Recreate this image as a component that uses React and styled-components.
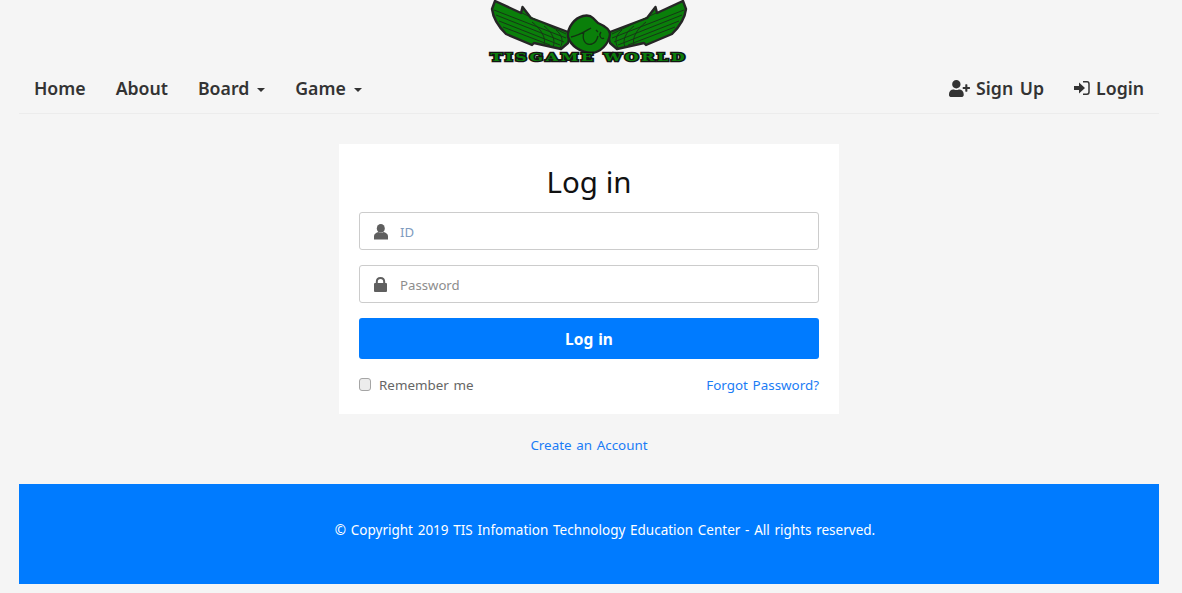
import React from "react";
import styled, { createGlobalStyle } from "styled-components";
import { FaUserPlus } from "react-icons/fa";

const Global = createGlobalStyle`
  html, body { margin: 0; padding: 0; background: #f5f5f5; }
  body { font-family: "Noto Sans", "Open Sans", "Liberation Sans", sans-serif; color: #333; overflow: hidden; }
  * { box-sizing: border-box; }
`;
const Page = styled.div`
  width: 1182px; height: 593px; padding: 0 23px 0 19px; display: flex; flex-direction: column;
`;
const LogoRow = styled.div`
  height: 65px; display: flex; justify-content: center;
`;
const Nav = styled.nav`
  height: 49px; border-bottom: 1px solid #ececec; display: flex; justify-content: space-between; align-items: center;
  padding: 0 15px 2px 15px;
`;
const NavGroup = styled.div`display: flex; align-items: center; gap: 30px;`;
const NavLink = styled.a`
  font-size: 17.7px; font-weight: 600; color: #333; line-height: 24px; display: flex; align-items: center; white-space: nowrap;
  word-spacing: 2px;
`;
const Caret = styled.span`
  width: 0; height: 0; margin-left: 8px; margin-top: 3px;
  border-left: 4px solid transparent; border-right: 4px solid transparent; border-top: 4px solid #333;
`;
const NavIcon = styled.span`display: inline-flex; margin-right: 6px; color: #333;`;
const Main = styled.main`
  flex: none; display: flex; flex-direction: column; align-items: center; padding-top: 30px;
`;
const Card = styled.form`
  width: 500px; height: 270px; background: #fff; padding: 20px; display: flex; flex-direction: column;
`;
const Title = styled.h2`
  flex: none; margin: -2px 0 11px; font-size: 29.5px; font-weight: 400; line-height: 39px; text-align: center; color: #111; height: 39px;
`;
const Field = styled.div`
  flex: none; height: 38px; border: 1px solid #ccc; border-radius: 3px; display: flex; align-items: center; margin-bottom: 15px;
  padding-left: 14px; background: #fff;
`;
const FieldIcon = styled.span`
  width: 26px; display: flex; color: #5f5f5f; padding-top: 1px;
`;
const Input = styled.input`
  flex: 1; border: 0; outline: 0; font: 400 13.2px "Noto Sans", sans-serif; color: #555; background: transparent; padding: 1px 0 0;
  &::placeholder { color: #8d8d8d; opacity: 1; }
`;
const IdInput = styled(Input)`&::placeholder { color: #7f9cc0; }`;
const Submit = styled.button`
  flex: none; height: 41px; border: 0; border-radius: 3px; background: #007bff; color: #fff; font: 700 15.5px "Noto Sans", sans-serif; width: 100%;
  word-spacing: 1px;
`;
const Options = styled.div`
  flex: none; display: flex; justify-content: space-between; align-items: center; margin-top: 16px; height: 20px; font-size: 13.4px;
  word-spacing: 1.2px;
`;
const Remember = styled.label`display: flex; align-items: center; color: #666; gap: 8px;`;
const Check = styled.span`
  width: 12px; height: 13px; border: 1px solid #a5a5a5; border-radius: 3px; background: #ececec; display: block; margin-top: -2px;
`;
const BlueLink = styled.a`color: #1a7cf5; font-size: 13.4px; white-space: nowrap; word-spacing: 1.2px;`;
const CreateRow = styled.div`margin-top: 21px; height: 20px; line-height: 18px; text-align: center;`;
const Footer = styled.footer`
  flex: none; height: 100px; margin-top: 29px; background: #007bff; color: #fff; display: flex; align-items: center; justify-content: center;
  font-size: 13.5px; word-spacing: 1.2px; padding: 0 0 9px 32px;
`;

const WING = "M7 1 L33 13 L34.5 7 L43 18 L80 32 L81.5 37 L80 43 L73 49 L46 43 L44 45 L18 34 C11 27 5 18 4 9 Z";
const Wing = ({ flip }) => (
  <g transform={flip ? "translate(202 0) scale(-1 1)" : undefined}>
    <path d={WING} fill="#0a7f0a" stroke="#262626" strokeWidth="2.4" strokeLinejoin="round" />
    <g fill="none" stroke="#173617" strokeWidth="1">
      <path d="M6 10 L78 38" />
      <path d="M8 15 L76 42" />
      <path d="M11 21 L72 45" />
      <path d="M15 27 L62 45" />
      <path d="M34 13 L78 34" />
      <path d="M44 22 C54 30 58 38 56 45" />
      <path d="M56 26 C64 32 68 40 65 47" />
      <path d="M68 30 C74 35 76 41 72 48" />
    </g>
  </g>
);
const Logo = () => (
  <svg width="202" height="65" viewBox="0 0 202 65">
    <Wing />
    <Wing flip />
    <path d="M95 16 C99 15 103 16 105 18 L110 23 C117 26 122 30 122 34 C121 44 112 53 103 53 C92 52 83 46 80 37 C79 27 87 18 95 16 Z" fill="#0a7f0a" stroke="#222" strokeWidth="2.4" />
    <path d="M83 37 C90 36 96 32 103 28 M96 32 C94 38 96 46 104 44 C107 43 109 40 110 36 M113 32 C110 36 114 40 116 38 M108 30 L110 32" fill="none" stroke="#123212" strokeWidth="1.3" />
    <text x="101" y="61" textAnchor="middle" fontFamily="'DejaVu Serif', serif" fontWeight="700" fontSize="11.5" letterSpacing="2"
      textLength="197" lengthAdjust="spacingAndGlyphs" fill="#0a7f0a" stroke="#141414" strokeWidth="2.6" paintOrder="stroke">TISGAME WORLD</text>
  </svg>
);
const LoginIcon = () => (
  <svg width="16" height="14" viewBox="0 0 16 14">
    <path d="M0 5 H5 V1.5 L11 7 L5 12.5 V9 H0 Z" fill="#333" />
    <path d="M9 .8 H13 Q15 .8 15 3 V11 Q15 13.2 13 13.2 H9" fill="none" stroke="#333" strokeWidth="1.5" />
  </svg>
);
const UserIcon = () => (
  <svg width="14" height="16" viewBox="0 0 14 16" fill="currentColor">
    <ellipse cx="6.8" cy="4.4" rx="4" ry="4.4" />
    <path d="M0 15.6 V12 C0 9.6 2.4 8.8 4.4 8 C6 9.4 8 9.4 9.6 8 C11.6 8.8 14 9.6 14 12 V15.6 Z" />
  </svg>
);
const LockIcon = () => (
  <svg width="13" height="15" viewBox="0 0 13 15">
    <path d="M2.8 7 V4.8 C2.8 2.6 4.3 1 6.5 1 C8.7 1 10.2 2.6 10.2 4.8 V7" fill="none" stroke="currentColor" strokeWidth="2" />
    <rect x="0" y="6" width="13" height="9" rx="1" fill="currentColor" />
  </svg>
);

export default function App() {
  return (
    <Page>
      <Global />
      <LogoRow><Logo /></LogoRow>
      <Nav>
        <NavGroup>
          <NavLink>Home</NavLink>
          <NavLink>About</NavLink>
          <NavLink>Board<Caret /></NavLink>
          <NavLink>Game<Caret /></NavLink>
        </NavGroup>
        <NavGroup>
          <NavLink><NavIcon><FaUserPlus size={21} /></NavIcon>Sign Up</NavLink>
          <NavLink><NavIcon><LoginIcon /></NavIcon>Login</NavLink>
        </NavGroup>
      </Nav>
      <Main>
        <Card>
          <Title>Log in</Title>
          <Field>
            <FieldIcon><UserIcon /></FieldIcon>
            <IdInput placeholder="ID" />
          </Field>
          <Field>
            <FieldIcon><LockIcon /></FieldIcon>
            <Input placeholder="Password" />
          </Field>
          <Submit type="button">Log in</Submit>
          <Options>
            <Remember><Check />Remember me</Remember>
            <BlueLink>Forgot Password?</BlueLink>
          </Options>
        </Card>
        <CreateRow><BlueLink>Create an Account</BlueLink></CreateRow>
      </Main>
      <Footer>© Copyright 2019 TIS Infomation Technology Education Center - All rights reserved.</Footer>
    </Page>
  );
}
